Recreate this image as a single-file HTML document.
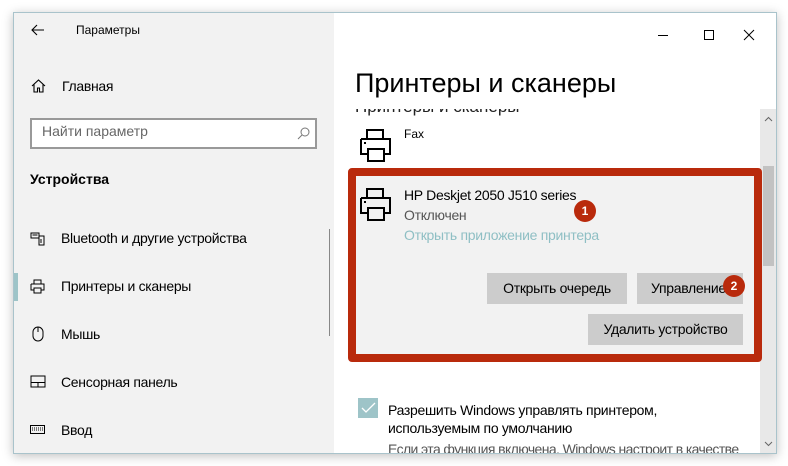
<!DOCTYPE html><html><head><meta charset="utf-8"><style>
body{margin:0;width:788px;height:466px;background:#fff;position:relative;overflow:hidden;font-family:"Segoe UI","Liberation Sans","DejaVu Sans",sans-serif;color:#000}
.a{position:absolute}
.win{left:13px;top:12px;width:762px;height:440px;border:1px solid #a9c3cb;box-shadow:0 2px 10px rgba(0,0,0,.25);background:#fff;overflow:hidden}
.side{left:0;top:0;width:320px;height:440px;background:#f2f2f2}
.t{font-size:14px;white-space:nowrap;letter-spacing:-0.3px}
.btn{background:#cccccc;font-size:14px;text-align:center;line-height:31px;height:31px;letter-spacing:-0.3px}
.badge{width:22px;height:22px;border-radius:50%;background:#b92a0c;color:#fff;font-size:12px;font-weight:bold;text-align:center;line-height:22px}
svg{position:absolute}
</style></head><body>
<div class="a win">
 <div class="a side"></div>
 <svg style="left:17px;top:10px" width="14" height="14" viewBox="0 0 14 14"><path d="M13 7H1M6 2L1 7l5 5" fill="none" stroke="#000" stroke-width="1.1"/></svg>
 <div class="a" style="left:62px;top:10px;font-size:12px">Параметры</div>
 <svg style="left:17px;top:66px" width="15" height="14" viewBox="0 0 15 14"><path d="M1 7L7.5 1 14 7M3 5.5V13h3.5V9h2v4H12V5.5" fill="none" stroke="#000" stroke-width="1.1"/></svg>
 <div class="a t" style="left:48px;top:65px">Главная</div>
 <div class="a" style="left:16px;top:105px;width:283px;height:27px;border:2px solid #999;background:#fff"></div>
 <div class="a" style="left:28px;top:110px;font-size:14px;color:#666">Найти параметр</div>
 <svg style="left:283px;top:114px" width="13" height="13" viewBox="0 0 13 13"><circle cx="8" cy="5" r="4" fill="none" stroke="#777"/><path d="M5 8L1 12" stroke="#777"/></svg>
 <div class="a" style="left:16px;top:158px;font-size:14px;font-weight:bold">Устройства</div>
 <div class="a" style="left:315px;top:216px;width:1px;height:107px;background:#888"></div>
 <svg style="left:16px;top:219px" width="15" height="14" viewBox="0 0 15 14"><rect x="1" y="1" width="8" height="5" fill="none" stroke="#000"/><rect x="9" y="4" width="5" height="9" fill="none" stroke="#000"/><path d="M2.5 3h5M11 7v4" stroke="#000"/></svg>
 <div class="a t" style="left:47px;top:217px">Bluetooth и другие устройства</div>
 <div class="a" style="left:0;top:260px;width:4px;height:28px;background:#9ec4c8"></div>
 <svg style="left:16px;top:266px" width="15" height="15" viewBox="0 0 15 15"><path d="M4 5V1h7v4M1 5h13v6h-3M4 11H1V5" fill="none" stroke="#000"/><rect x="4" y="9" width="7" height="5" fill="none" stroke="#000"/></svg>
 <div class="a t" style="left:47px;top:265px">Принтеры и сканеры</div>
 <svg style="left:18px;top:313px" width="12" height="16" viewBox="0 0 12 16"><rect x="1" y="1" width="10" height="14" rx="5" fill="none" stroke="#000"/><path d="M6 1v5" stroke="#000"/></svg>
 <div class="a t" style="left:47px;top:313px">Мышь</div>
 <svg style="left:16px;top:362px" width="16" height="13" viewBox="0 0 16 13"><rect x="1" y="1" width="14" height="11" fill="none" stroke="#000"/><path d="M1 7.5h14M8 7.5V12" stroke="#000"/></svg>
 <div class="a t" style="left:47px;top:361px">Сенсорная панель</div>
 <svg style="left:16px;top:412px" width="15" height="9" viewBox="0 0 15 9"><rect x="0.5" y="0.5" width="14" height="8" fill="none" stroke="#000"/><path d="M2 3h11M2 5h11" stroke="#000" stroke-dasharray="1 1"/></svg>
 <div class="a t" style="left:47px;top:409px">Ввод</div>

 <svg style="left:643px;top:16px" width="100" height="12" viewBox="0 0 100 12"><path d="M1 6.5h10" stroke="#000"/><rect x="47.5" y="1.5" width="9" height="9" fill="none" stroke="#000"/><path d="M87 1l10 10M97 1L87 11" stroke="#000"/></svg>
 <div class="a" style="left:341px;top:55px;font-size:27px;font-weight:300;white-space:nowrap">Принтеры и сканеры</div>
 <div class="a" style="left:341px;top:96px;width:300px;height:11px;overflow:hidden"><div style="font-size:17px;margin-top:-12px;color:#222">Принтеры и сканеры</div></div>
 <div class="a" style="left:746px;top:96px;width:16px;height:344px;background:#e8e8e8"></div>
 <div class="a" style="left:749px;top:153px;width:11px;height:100px;background:#c2c2c2"></div>
 <svg style="left:750px;top:103px" width="9" height="6" viewBox="0 0 9 6"><path d="M1 5l3.5-3.5L8 5" fill="none" stroke="#666"/></svg>
 <svg style="left:750px;top:428px" width="9" height="6" viewBox="0 0 9 6"><path d="M1 1l3.5 3.5L8 1" fill="none" stroke="#666"/></svg>
 <svg style="left:345px;top:116px" width="34" height="34" viewBox="0 0 34 34"><path d="M8 10V1h16v9M2 10h29v15h-6M9 25H2V10" fill="none" stroke="#000" stroke-width="2"/><rect x="9" y="20" width="16" height="12" fill="none" stroke="#000" stroke-width="2"/><rect x="5" y="13" width="2" height="2"/></svg>
 <div class="a" style="left:390px;top:114px;font-size:12px">Fax</div>
 <div class="a" style="left:334px;top:155px;width:398px;height:178px;border:8px solid #b92a0c;border-radius:4px;background:#f2f2f2"></div>
 <svg style="left:345px;top:175px" width="34" height="34" viewBox="0 0 34 34"><path d="M8 10V1h16v9M2 10h29v15h-6M9 25H2V10" fill="none" stroke="#000" stroke-width="2"/><rect x="9" y="20" width="16" height="12" fill="none" stroke="#000" stroke-width="2"/><rect x="5" y="13" width="2" height="2"/></svg>
 <div class="a t" style="left:390px;top:174px">HP Deskjet 2050 J510 series</div>
 <div class="a t" style="left:390px;top:194px;color:#555">Отключен</div>
 <div class="a t" style="left:390px;top:214px;color:#8fbfc4">Открыть приложение принтера</div>
 <div class="a badge" style="left:560px;top:187px">1</div>
 <div class="a btn" style="left:473px;top:260px;width:140px">Открыть очередь</div>
 <div class="a btn" style="left:623px;top:260px;width:106px;text-align:left;text-indent:14px">Управление</div>
 <div class="a badge" style="left:709px;top:262px">2</div>
 <div class="a btn" style="left:574px;top:301px;width:155px">Удалить устройство</div>
 <div class="a" style="left:344px;top:385px;width:20px;height:20px;background:#9ec4c8"></div>
 <svg style="left:347px;top:389px" width="15" height="12" viewBox="0 0 15 12"><path d="M1 6l4 4 9-9" fill="none" stroke="#fff" stroke-width="1.3"/></svg>
 <div class="a t" style="left:374px;top:389px">Разрешить Windows управлять принтером,</div>
 <div class="a t" style="left:374px;top:407px">используемым по умолчанию</div>
 <div class="a t" style="left:374px;top:428px;color:#555;letter-spacing:-0.6px">Если эта функция включена, Windows настроит в качестве</div>
</div>
</body></html>
